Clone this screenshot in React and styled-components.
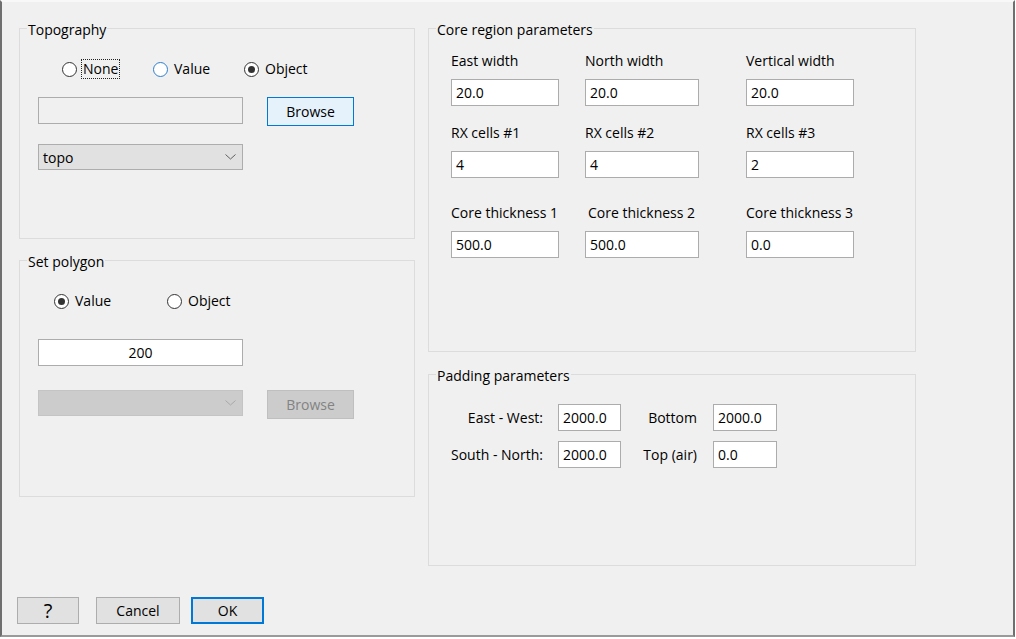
import React from "react";
import styled, { createGlobalStyle } from "styled-components";

const Global = createGlobalStyle`
  html, body { margin: 0; padding: 0; background: #ffffff; }
  body { font-family: "Open Sans", "Noto Sans", sans-serif; font-size: 14px; color: #000; }
  * { box-sizing: border-box; }
`;

const Window = styled.div`
  width: 1015px;
  height: 637px;
  background: #f0f0f0;
  border-top: 2px solid #f8f8f8;
  border-left: 2px solid #6f6f6f;
  border-right: 2px solid #6f6f6f;
  border-bottom: 2px solid #9a9a9a;
  display: flex;
  flex-direction: column;
  padding: 26px 0 0 17px;
`;

const Content = styled.div`
  display: flex;
  gap: 13px;
  align-items: flex-start;
`;

const Column = styled.div`
  display: flex;
  flex-direction: column;
  gap: ${(p) => p.$gap}px;
  width: ${(p) => p.$width}px;
`;

const Group = styled.div`
  position: relative;
  border: 1px solid #dcdcdc;
  height: ${(p) => p.$height}px;
  padding: ${(p) => p.$pad || "0"};
`;

const GroupTitle = styled.span`
  position: absolute;
  top: -9px;
  left: 7px;
  padding: 0 1px;
  background: #f0f0f0;
  line-height: 19px;
  white-space: nowrap;
`;

const RadioRow = styled.div`
  display: grid;
  grid-template-columns: repeat(3, ${(p) => p.$col}px);
  padding-left: ${(p) => p.$left}px;
  height: 20px;
  align-items: center;
`;

const RadioItem = styled.label`
  display: flex;
  align-items: center;
  gap: 6px;
  line-height: 18px;
`;

const Circle = styled.span`
  width: 15px;
  height: 15px;
  border-radius: 50%;
  border: 1px solid ${(p) => (p.$focus ? "#2d7fd0" : "#333")};
  background: #fff;
  display: flex;
  align-items: center;
  justify-content: center;
  flex: none;
  &::after {
    content: "";
    width: 7px;
    height: 7px;
    border-radius: 50%;
    background: ${(p) => (p.$checked ? "#333" : "transparent")};
  }
`;

const RadioText = styled.span`
  outline: ${(p) => (p.$dotted ? "1px dotted #222" : "none")};
  outline-offset: 0;
  padding: 0 1px;
  margin-left: -1px;
`;

const FieldRow = styled.div`
  display: flex;
  align-items: flex-start;
  gap: 24px;
  padding-left: 18px;
  margin-top: ${(p) => p.$top}px;
`;

const TextBox = styled.div`
  width: ${(p) => p.$w}px;
  height: ${(p) => p.$h || 26}px;
  border: 1px solid #acacac;
  background: ${(p) => (p.$bg ? p.$bg : "#fff")};
  display: flex;
  align-items: center;
  justify-content: ${(p) => (p.$center ? "center" : "flex-start")};
  padding-left: ${(p) => (p.$center ? 0 : 4)}px;
  line-height: 18px;
  flex: none;
`;

const Combo = styled.div`
  width: 205px;
  height: 26px;
  border: 1px solid ${(p) => (p.$disabled ? "#c4c4c4" : "#adadad")};
  background: ${(p) => (p.$disabled ? "#cccccc" : "#e1e1e1")};
  display: flex;
  align-items: center;
  justify-content: space-between;
  padding: 0 6px 0 4px;
  color: #000;
`;

const Chevron = ({ color }) => (
  <svg width="11" height="6" viewBox="0 0 11 6">
    <path d="M0.5 0.5 L5.5 5 L10.5 0.5" fill="none" stroke={color} strokeWidth="1" />
  </svg>
);

const Button = styled.div`
  width: ${(p) => p.$w}px;
  height: ${(p) => p.$h || 27}px;
  margin-left: ${(p) => p.$ml || 0}px;
  border: ${(p) => (p.$primary ? "2px solid #0078d7" : p.$focus ? "1px solid #0078d7" : "1px solid #adadad")};
  background: ${(p) => (p.$disabled ? "#cccccc" : p.$focus ? "#e5f1fb" : "#e1e1e1")};
  color: ${(p) => (p.$disabled ? "#838383" : "#000")};
  border-color: ${(p) => (p.$disabled ? "#bfbfbf" : undefined)};
  display: flex;
  align-items: center;
  justify-content: center;
  font-size: ${(p) => p.$fs || 14}px;
  flex: none;
`;

const CoreGrid = styled.div`
  display: grid;
  grid-template-columns: 134px 161px 107px;
  padding-left: 22px;
`;

const Cell = styled.div`
  display: flex;
  flex-direction: column;
  gap: 9px;
  margin-top: ${(p) => p.$top}px;
`;

const CellLabel = styled.span`
  line-height: 19px;
  height: 19px;
  white-space: nowrap;
  padding-left: ${(p) => p.$shift || 0}px;
`;

const PadGrid = styled.div`
  display: grid;
  grid-template-columns: 95px 63px 62px 64px;
  column-gap: 15px;
  row-gap: 10px;
  padding: 29px 0 0 19px;
  align-items: center;
`;

const PadLabel = styled.span`
  text-align: right;
  white-space: nowrap;
  padding-right: ${(p) => p.$pr || 0}px;
`;

const Footer = styled.div`
  display: flex;
  margin-top: 31px;
  margin-left: -2px;
`;

const Radio = ({ label, checked, focus, dotted }) => (
  <RadioItem>
    <Circle $checked={checked} $focus={focus} />
    <RadioText $dotted={dotted}>{label}</RadioText>
  </RadioItem>
);

const coreRows = [
  { top: 22, cells: [["East width", "20.0"], ["North width", "20.0"], ["Vertical width", "20.0"]] },
  { top: 17, cells: [["RX cells #1", "4"], ["RX cells #2", "4"], ["RX cells #3", "2"]] },
  { top: 25, cells: [["Core thickness 1", "500.0"], ["Core thickness 2", "500.0", 3], ["Core thickness 3", "0.0"]] },
];
const widths = [108, 114, 108];

export default function App() {
  return (
    <>
      <Global />
      <Window>
        <Content>
          <Column $width={396} $gap={21}>
            <Group $height={211} $pad="30px 0 0 0">
              <GroupTitle>Topography</GroupTitle>
              <RadioRow $col={91} $left={42}>
                <Radio label="None" dotted />
                <Radio label="Value" focus />
                <Radio label="Object" checked />
              </RadioRow>
              <FieldRow $top={18}>
                <TextBox $w={205} $h={27} $bg="#f0f0f0" />
                <Button $w={87} $h={29} $focus>Browse</Button>
              </FieldRow>
              <FieldRow $top={18}>
                <Combo>
                  <span>topo</span>
                  <Chevron color="#606060" />
                </Combo>
              </FieldRow>
            </Group>
            <Group $height={237} $pad="30px 0 0 0">
              <GroupTitle>Set polygon</GroupTitle>
              <RadioRow $col={113} $left={34}>
                <Radio label="Value" checked />
                <Radio label="Object" />
              </RadioRow>
              <FieldRow $top={28}>
                <TextBox $w={205} $h={27} $center>200</TextBox>
              </FieldRow>
              <FieldRow $top={24}>
                <Combo $disabled>
                  <span />
                  <Chevron color="#a8a8a8" />
                </Combo>
                <Button $w={87} $h={29} $disabled>Browse</Button>
              </FieldRow>
            </Group>
          </Column>
          <Column $width={488} $gap={22}>
            <Group $height={324}>
              <GroupTitle>Core region parameters</GroupTitle>
              {coreRows.map((row, ri) => (
                <CoreGrid key={ri}>
                  {row.cells.map(([label, value, shift], ci) => (
                    <Cell key={ci} $top={row.top}>
                      <CellLabel $shift={shift}>{label}</CellLabel>
                      <TextBox $w={widths[ci]} $h={27}>{value}</TextBox>
                    </Cell>
                  ))}
                </CoreGrid>
              ))}
            </Group>
            <Group $height={192}>
              <GroupTitle>Padding parameters</GroupTitle>
              <PadGrid>
                <PadLabel>East - West:</PadLabel>
                <TextBox $w={63} $h={27}>2000.0</TextBox>
                <PadLabel $pr={1}>Bottom</PadLabel>
                <TextBox $w={64} $h={27}>2000.0</TextBox>
                <PadLabel>South - North:</PadLabel>
                <TextBox $w={63} $h={27}>2000.0</TextBox>
                <PadLabel $pr={1}>Top (air)</PadLabel>
                <TextBox $w={64} $h={27}>0.0</TextBox>
              </PadGrid>
            </Group>
          </Column>
        </Content>
        <Footer>
          <Button $w={62} $fs={20}>?</Button>
          <Button $w={84} $ml={17}>Cancel</Button>
          <Button $w={73} $ml={11} $primary>OK</Button>
        </Footer>
      </Window>
    </>
  );
}
